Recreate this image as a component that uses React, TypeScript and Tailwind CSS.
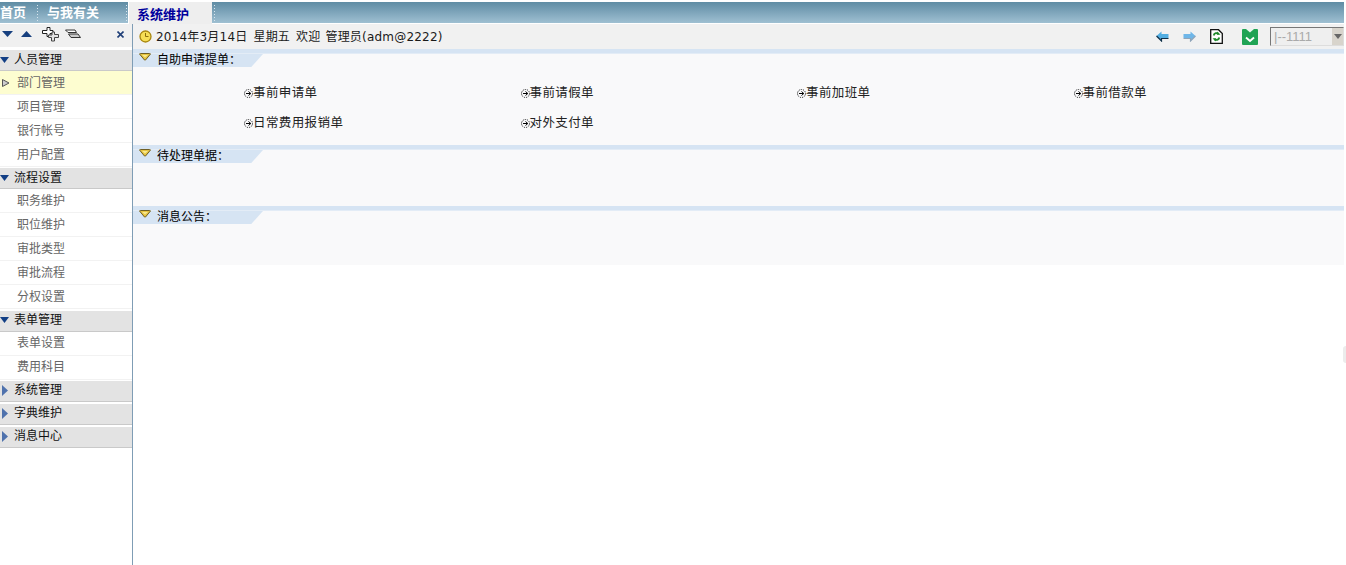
import { ReactNode } from "react";

const font = "font-['Liberation_Sans','Noto_Sans_CJK_SC',sans-serif]";

const menu = [
  { title: "人员管理", open: true, gap: "mb-[1px]", pad: "pb-0", items: ["部门管理", "项目管理", "银行帐号", "用户配置"] },
  { title: "流程设置", open: true, gap: "mb-[2px]", pad: "pb-0", items: ["职务维护", "职位维护", "审批类型", "审批流程", "分权设置"] },
  { title: "表单管理", open: true, gap: "mb-[1px]", pad: "pb-[2px]", items: ["表单设置", "费用科目"] },
  { title: "系统管理", open: false, gap: "mb-[2px]", pad: "pb-[2px]", items: [] },
  { title: "字典维护", open: false, gap: "mb-[2px]", pad: "pb-[2px]", items: [] },
  { title: "消息中心", open: false, gap: "mb-[2px]", pad: "pb-[2px]", items: [] },
];

const links = ["事前申请单", "事前请假单", "事前加班单", "事前借款单", "日常费用报销单", "对外支付单"];

function Dots() {
  return (
    <div className="flex flex-col gap-[2px]">
      {[0, 1, 2, 3, 4, 5].map((i) => (
        <span key={i} className="block w-[1px] h-[1px] bg-[#d8e6ee]" />
      ))}
    </div>
  );
}

function Chevron() {
  return (
    <svg width="12" height="8" viewBox="0 0 12 8" className="block">
      <path d="M.5 1 Q.5 .5 1.5 .5 H10.5 Q11.5 .5 11.5 1 L6.5 7 Q6 7.6 5.5 7 Z" fill="#e6c440" stroke="#6f5e24" />
      <path d="M3 2 H9 L6 4.6 Z" fill="#f7e88e" />
    </svg>
  );
}

function Section({ title, height, children }: { title: string; height: string; children?: ReactNode }) {
  return (
    <section className={`bg-[#f9f9fa] ${height}`}>
      <div className="h-[5px] bg-[#d6e4f3] border-b border-[#e3ecf6]" />
      <div className="relative h-[13px] w-[130px]">
        <div className="h-full bg-[#d6e4f3] [clip-path:polygon(0_0,100%_0,91%_100%,0_100%)]" />
        <div className="absolute left-[6px] top-[-1px]">
          <Chevron />
        </div>
        <span className="absolute left-[24px] top-[-2px] text-[12px] leading-[16px] text-black">{title}</span>
      </div>
      {children}
    </section>
  );
}

function LinkDot() {
  return (
    <svg width="9" height="9" viewBox="0 0 9 9" className="shrink-0">
      <circle cx="4.5" cy="4.5" r="4" fill="none" stroke="#222" strokeDasharray="1.2 1" />
      <path d="M2 4.5 H6.5 M4.5 2.5 L6.8 4.5 L4.5 6.5" fill="none" stroke="#000" />
    </svg>
  );
}

function Sidebar() {
  return (
    <aside className="w-[133px] shrink-0 bg-white border-r border-[#7f9db5] flex flex-col">
      <div className="h-[23px] flex items-center bg-[#f0f0f0] pl-[2px] pr-[8px] pb-[3px]">
        <svg width="11" height="6" viewBox="0 0 11 6" className="shrink-0">
          <path d="M0 0 H11 L5.5 6 Z" fill="#17407f" />
        </svg>
        <svg width="11" height="6" viewBox="0 0 11 6" className="ml-[8px] shrink-0">
          <path d="M0 6 H11 L5.5 0 Z" fill="#17407f" />
        </svg>
        <svg width="18" height="15" viewBox="0 0 18 15" className="ml-[10px] shrink-0">
          <path d="M5 .5 H8 V3.5 H11 V6.5 H8 V9.5 H5 V6.5 H.5 V3.5 H5 Z" fill="#fff" stroke="#222" />
          <path d="M10 5 H12.5 V7.5 H16.5 V10.5 H12.5 V14 H9.5 V10.5 H6.5 V8 H10 Z" fill="#e4e4e4" stroke="#444" />
        </svg>
        <svg width="16" height="11" viewBox="0 0 16 11" className="ml-[5px] shrink-0">
          <path d="M.5 1 H10 L11.5 3.5 H3 Z" fill="#fff" stroke="#333" />
          <path d="M3.5 5 H13 L15.5 8.5 H6 Z" fill="#ccc" stroke="#333" />
        </svg>
        <svg width="7" height="7" viewBox="0 0 7 7" className="ml-auto shrink-0">
          <path d="M.5 .5 L6.5 6.5 M6.5 .5 L.5 6.5" stroke="#1f3f78" strokeWidth="1.6" />
        </svg>
      </div>
      <nav className="flex flex-col pt-[3px]">
        {menu.map((group) => (
          <div key={group.title} className={group.gap}>
            <div className={`h-[21px] bg-[#e3e3e3] border-b border-[#c9c9c9] flex items-center text-[12px] text-[#111] leading-none ${group.pad}`}>
              <span className="w-[14px] flex justify-start shrink-0">
                {group.open ? (
                  <svg width="9" height="6" viewBox="0 0 9 6">
                    <path d="M0 0 H9 L4.5 6 Z" fill="#123f85" />
                  </svg>
                ) : (
                  <svg width="8" height="11" viewBox="0 0 8 11" className="ml-[1px]">
                    <path d="M1 0 L7 5.5 L1 11 Z" fill="#4f72ad" />
                  </svg>
                )}
              </span>
              {group.title}
            </div>
            {group.items.map((item, i) => (
              <div
                key={item}
                className={`h-[24px] flex items-center text-[12px] leading-none text-[#666] border-b border-[#f2f2f2] ${group.pad} ${
                  group.title === "人员管理" && i === 0 ? "bg-[#fdfdd0]" : "bg-white"
                }`}
              >
                <span className="w-[17px] shrink-0 pl-[2px]">
                  {group.title === "人员管理" && i === 0 && (
                    <svg width="8" height="8" viewBox="0 0 8 8" className="block">
                      <path d="M.5 .5 L7 4 L.5 7.5 Z" fill="#ccc" stroke="#555" />
                    </svg>
                  )}
                </span>
                {item}
              </div>
            ))}
          </div>
        ))}
      </nav>
    </aside>
  );
}

function Toolbar() {
  return (
    <div className="h-[25px] bg-[#f1f1f1] flex items-center pl-[6px] overflow-hidden">
      <svg width="13" height="13" viewBox="0 0 13 13" className="shrink-0">
        <circle cx="6.5" cy="6.5" r="5.5" fill="#f6de55" stroke="#a8860f" strokeWidth="1.3" />
        <path d="M6.5 3 V6.5 H9.5" fill="none" stroke="#8a6d0c" />
      </svg>
      <div className="ml-[4px] flex gap-[6px] text-[12px] tracking-[0.2px] text-[#1a1a1a] font-['DejaVu_Sans','Noto_Sans_CJK_SC',sans-serif]">
        <span>2014年3月14日</span>
        <span>星期五</span>
        <span>欢迎</span>
        <span className="-ml-[1px]">管理员(adm@2222)</span>
      </div>
      <div className="ml-auto flex items-center shrink-0">
        <svg width="13" height="11" viewBox="0 0 13 11">
          <path d="M5.5 .5 V3 H12.5 V7 H5.5 V10 L.5 5 Z" fill="#52aee2" />
          <path d="M.5 5 L5.5 10 V7.5 H12.5" fill="none" stroke="#0f3048" strokeWidth="1.2" />
        </svg>
        <svg width="13" height="11" viewBox="0 0 13 11" className="ml-[14px]">
          <path d="M7.5 .5 V3 H.5 V7 H7.5 V10 L12.5 5 Z" fill="#6fb6e8" />
          <path d="M12.5 5 L7.5 10 V7.5 H.5" fill="none" stroke="#8fa4b8" strokeWidth="1.2" />
        </svg>
        <svg width="13" height="15" viewBox="0 0 13 15" className="ml-[14px]">
          <path d="M.7 .7 H8.5 L12.3 4.5 V14.3 H.7 Z" fill="#fff" stroke="#111" strokeWidth="1.3" />
          <path d="M3.7 6.5 A3 3 0 0 1 8.8 5 M9.3 8.5 A3 3 0 0 1 4.2 10" fill="none" stroke="#1f8a2a" strokeWidth="1.8" />
          <path d="M7 2.5 L10.5 5.8 H6.8 Z M6 12.5 L2.5 9.2 H6.2 Z" fill="#1f8a2a" />
        </svg>
        <svg width="16" height="16" viewBox="0 0 16 16" className="ml-[19px]">
          <rect width="16" height="16" rx="1" fill="#1fa354" />
          <path d="M4 0 L8 3.5 L12 0 Z" fill="#e9f7ee" />
          <path d="M4 8.5 L8 12 L12 8.5" fill="none" stroke="#fff" strokeWidth="1.9" />
        </svg>
        <div className="ml-[12px] w-[74px] h-[19px] flex items-center bg-[#efefef] border border-[#777] border-b-[#ddd] border-r-[#ddd] text-[13px] text-[#aaa] leading-none pl-[3px] overflow-hidden">
          <span className="flex-1">|--1111</span>
          <span className="w-[11px] h-full bg-[#d8d4cc] flex items-center justify-center">
            <svg width="8" height="5" viewBox="0 0 8 5">
              <path d="M0 0 H8 L4 5 Z" fill="#666" />
            </svg>
          </span>
        </div>
      </div>
    </div>
  );
}

export default function App() {
  return (
    <div className={`relative h-[565px] w-full overflow-hidden bg-white flex flex-col pr-[2px] ${font}`}>
      <header className="h-[24px] pt-[2px] flex bg-white shrink-0">
        <div className="w-[128px] h-[21px] bg-gradient-to-b from-[#5f8ca4] to-[#9fc0d2] flex items-center text-[13px] font-bold text-white leading-none">
          <span>首页</span>
          <span className="ml-[11px]"><Dots /></span>
          <span className="ml-[9px]">与我有关</span>
          <span className="ml-[27px]"><Dots /></span>
        </div>
        <div className="ml-[1px] w-[83px] h-[22px] bg-[#eeeeee] flex items-center pl-[8px] pt-[2px] text-[13px] font-bold text-[#00009c] leading-none">
          系统维护
        </div>
        <div className="flex-1 h-[21px] bg-gradient-to-b from-[#5f8ca4] to-[#9fc0d2] flex items-center pl-[2px]">
          <Dots />
        </div>
      </header>
      <div className="flex flex-1 min-h-0">
        <Sidebar />
        <main className="flex-1 min-w-0 flex flex-col">
          <Toolbar />
          <Section title="自助申请提单：" height="h-[96px]">
            <div className="ml-[111px] w-[1106px] mt-[18px] grid grid-cols-4 gap-y-[14px]">
              {links.map((label) => (
                <div key={label} className="flex items-center h-[16px] text-[12.5px] leading-none tracking-[0.4px] text-[#222]">
                  <LinkDot />
                  {label}
                </div>
              ))}
            </div>
          </Section>
          <Section title="待处理单据：" height="h-[61px]" />
          <Section title="消息公告：" height="h-[59px]" />
        </main>
      </div>
      <div className="absolute right-0 top-[346px] h-[17px] w-[3px] rounded-l-full bg-[#ececec]" />
    </div>
  );
}
